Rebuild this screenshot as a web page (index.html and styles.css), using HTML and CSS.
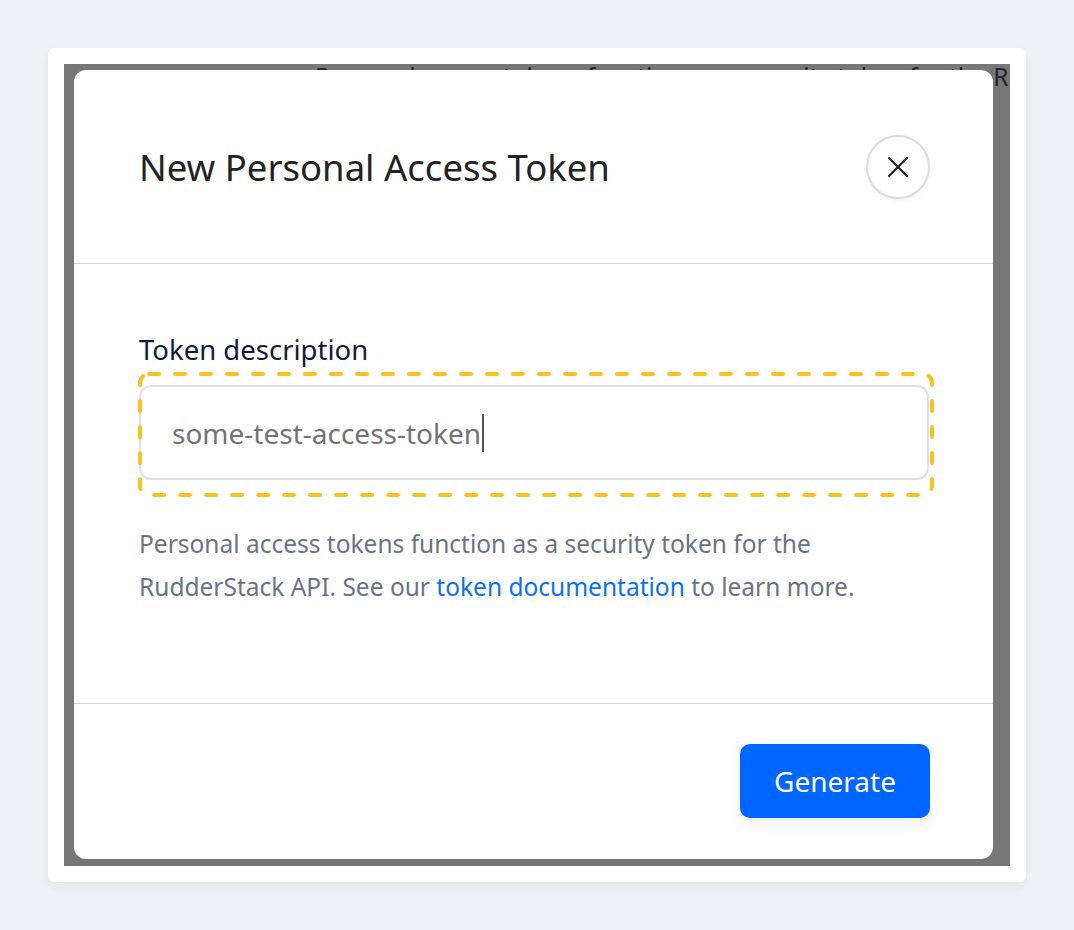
FILE: index.html
```html
<!DOCTYPE html>
<html lang="en">
<head>
<meta charset="utf-8">
<title>New Personal Access Token</title>
<link rel="stylesheet" href="styles.css">
</head>
<body>
<div class="card">
  <div class="frame">
    <p class="bg-text">Personal access tokens function as a security token for the RudderStack API. See our token documentation to learn more.</p>
    <div class="overlay">
      <div class="modal">
        <div class="modal-header">
          <h1 class="modal-title">New Personal Access Token</h1>
          <button class="close-btn" aria-label="Close">
            <svg width="22" height="22" viewBox="0 0 22 22"><path d="M2 2 L20 20 M20 2 L2 20" stroke="#222" stroke-width="2.2" stroke-linecap="round" fill="none"/></svg>
          </button>
        </div>
        <div class="modal-body">
          <div class="label">Token description</div>
          <div class="field-wrap">
            <div class="field"><span class="field-value">some-test-access-token</span></div>
            <svg class="focus-ring" viewBox="0 0 796 125" width="796" height="125" aria-hidden="true"><rect x="2" y="2" width="792" height="121" rx="9" ry="9" fill="none" stroke="#f8c221" stroke-width="4" stroke-linecap="round" stroke-dasharray="10 16"/></svg>
          </div>
          <p class="help">Personal access tokens function as a security token for the<br>RudderStack API. See our <a class="link" href="#">token documentation</a> to learn more.</p>
        </div>
        <div class="modal-footer">
          <button class="btn-primary">Generate</button>
        </div>
      </div>
    </div>
  </div>
</div>
</body>
</html>
```

FILE: styles.css
```css
* { box-sizing: border-box; }
html, body { margin: 0; padding: 0; }
body {
  background: #eef2f6;
  font-family: "Noto Sans", "Open Sans", sans-serif;
  padding: 48px;
}
.card {
  background: #fff;
  border-radius: 6px;
  padding: 16px;
  box-shadow: 0 4px 10px rgba(30, 40, 60, 0.06);
  height: 834px;
}
.frame {
  position: relative;
  overflow: hidden;
  height: 802px;
  background: #fff;
}
.bg-text {
  margin: -2px 0 0 251px;
  font-size: 24.5px;
  line-height: 30px;
  color: #4a5263;
  white-space: nowrap;
}
.overlay {
  position: absolute;
  inset: 0;
  background: rgba(0, 0, 0, 0.533);
  padding: 6px 17px 7px 10px;
}
.modal {
  background: #fff;
  border-radius: 12px;
  height: 789px;
  display: flex;
  flex-direction: column;
}
.modal-header {
  height: 194px;
  border-bottom: 1px solid #d3d7dd;
  display: flex;
  align-items: center;
  justify-content: space-between;
  padding: 0 63px 0 65px;
}
.modal-title {
  margin: 0;
  font-size: 36.5px;
  font-weight: 400;
  color: #222;
}
.close-btn {
  width: 64px;
  height: 64px;
  border-radius: 50%;
  border: 2px solid #dcdcdc;
  background: #fff;
  display: flex;
  align-items: center;
  justify-content: center;
  padding: 0;
  box-shadow: 0 2px 4px rgba(0, 0, 0, 0.05);
}
.modal-body {
  flex: 1;
  padding: 69px 64px 0 65px;
  border-bottom: 1px solid #d3d7dd;
}
.label {
  font-size: 27.5px;
  line-height: 34px;
  color: #141a36;
}
.field-wrap {
  position: relative;
  margin-top: 18px;
}
.focus-ring {
  position: absolute;
  top: -13px;
  left: -1px;
  pointer-events: none;
}
.field {
  height: 95px;
  border: 2px solid #e2e2e2;
  border-radius: 12px;
  display: flex;
  align-items: center;
  padding-left: 31px;
}
.field-value {
  font-size: 28px;
  color: #737373;
  border-right: 2px solid #555;
  padding-right: 1px;
  line-height: 38px;
}
.help {
  margin: 42px 0 0 0;
  font-size: 24.5px;
  line-height: 43px;
  color: #6b7385;
  white-space: nowrap;
}
.link {
  color: #0b72ee;
  text-decoration: none;
}
.modal-footer {
  height: 155px;
  display: flex;
  align-items: center;
  justify-content: flex-end;
  padding: 0 63px 2px 0;
}
.btn-primary {
  width: 190px;
  height: 74px;
  border: none;
  border-radius: 10px;
  background: #0066ff;
  color: #fff;
  font-family: "Noto Sans", "Open Sans", sans-serif;
  font-size: 28px;
  box-shadow: 0 6px 16px rgba(0, 0, 0, 0.07);
}
```
